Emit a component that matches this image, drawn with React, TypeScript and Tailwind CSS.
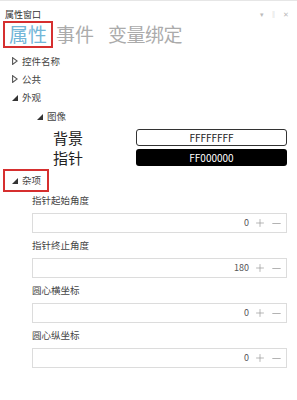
import { Minus, Plus } from 'lucide-react';

const font = { fontFamily: '"Noto Sans CJK SC", "Noto Sans", sans-serif' };

function Closed() {
  return (
    <svg width="6" height="8" viewBox="0 0 6 8" className="mr-[4px]">
      <path d="M0.6 0.6 L5.2 4 L0.6 7.4 Z" fill="none" stroke="#555" strokeWidth="1.1" />
    </svg>
  );
}

function Open() {
  return (
    <svg width="6" height="6" viewBox="0 0 6 6" className="mr-[4px]">
      <path d="M6 0 L6 6 L0 6 Z" fill="#333" />
    </svg>
  );
}

function NumberField({ label, value }: { label: string; value: string }) {
  return (
    <div className="pl-[32px] pr-[10px] mb-[3px]">
      <div className="h-[18px] mb-[4px] flex items-center text-[9.5px] text-[#444]">{label}</div>
      <div className="h-[20px] border border-[#dcdcdc] bg-white flex items-center justify-end pr-[3px] text-[9px] text-[#555]">
        <span className="mr-[5px]">{value}</span>
        <Plus className="w-[12px] h-[12px] text-[#9a9a9a] mr-[4px]" strokeWidth={1.4} />
        <Minus className="w-[13px] h-[13px] text-[#9a9a9a]" strokeWidth={1.4} />
      </div>
    </div>
  );
}

export default function App() {
  return (
    <div className="w-[297px] h-[400px] bg-white overflow-hidden relative border-t border-[#e6e6e6]" style={font}>
      {/* header */}
      <div className="h-[18px] flex items-end justify-between px-[5px]">
        <span className="text-[9px] text-[#333] leading-none">属性窗口</span>
        <div className="flex items-center gap-[6px] text-[#bbb] text-[7px] leading-none pr-[3px] pb-[1px]">
          <span>▾</span>
          <span>‖</span>
          <span>✕</span>
        </div>
      </div>

      {/* tabs */}
      <div className="flex items-center h-[30px] pl-[3px]">
        <div className="border-2 border-[#d62f2f] h-[27px] flex items-center px-[4px]">
          <span className="text-[19px] text-[#72b6d8] leading-none -mt-[2px]">属性</span>
        </div>
        <span className="text-[19px] text-[#ababab] leading-none ml-[3px] -mt-[2px]">事件</span>
        <span className="text-[19px] text-[#ababab] leading-none ml-[14px] -mt-[2px] tracking-[-0.5px]">变量绑定</span>
      </div>

      {/* tree */}
      <div className="text-[9.5px] text-[#444]">
        <div className="h-[18px] flex items-center pl-[12px] mt-[3px]"><Closed />控件名称</div>
        <div className="h-[18px] flex items-center pl-[12px]"><Closed />公共</div>
        <div className="h-[19px] flex items-center pl-[12px]"><Open />外观</div>
        <div className="h-[19px] flex items-center pl-[37px]"><Open />图像</div>

        <div className="flex items-center h-[20px] mt-[1px]">
          <span className="w-[136px] pl-[53px] text-[15px] text-[#222] leading-none">背景</span>
          <div className="flex-1 mr-[10px] h-[17px] border border-[#333] rounded-[3px] bg-white flex items-center justify-center text-[10px] text-[#222]">FFFFFFFF</div>
        </div>
        <div className="flex items-center h-[20px]">
          <span className="w-[136px] pl-[53px] text-[15px] text-[#222] leading-none">指针</span>
          <div className="flex-1 mr-[10px] h-[17px] rounded-[3px] bg-black flex items-center justify-center text-[10px] text-white">FF000000</div>
        </div>

        <div className="pl-[3px] mt-[2px]">
          <div className="w-[46px] h-[23px] border-2 border-[#d62f2f] flex items-center pl-[7px]"><Open />杂项</div>
        </div>
      </div>

      <div className="-mt-[1px]">
        <NumberField label="指针起始角度" value="0" />
        <NumberField label="指针终止角度" value="180" />
        <NumberField label="圆心横坐标" value="0" />
        <NumberField label="圆心纵坐标" value="0" />
      </div>
    </div>
  );
}
